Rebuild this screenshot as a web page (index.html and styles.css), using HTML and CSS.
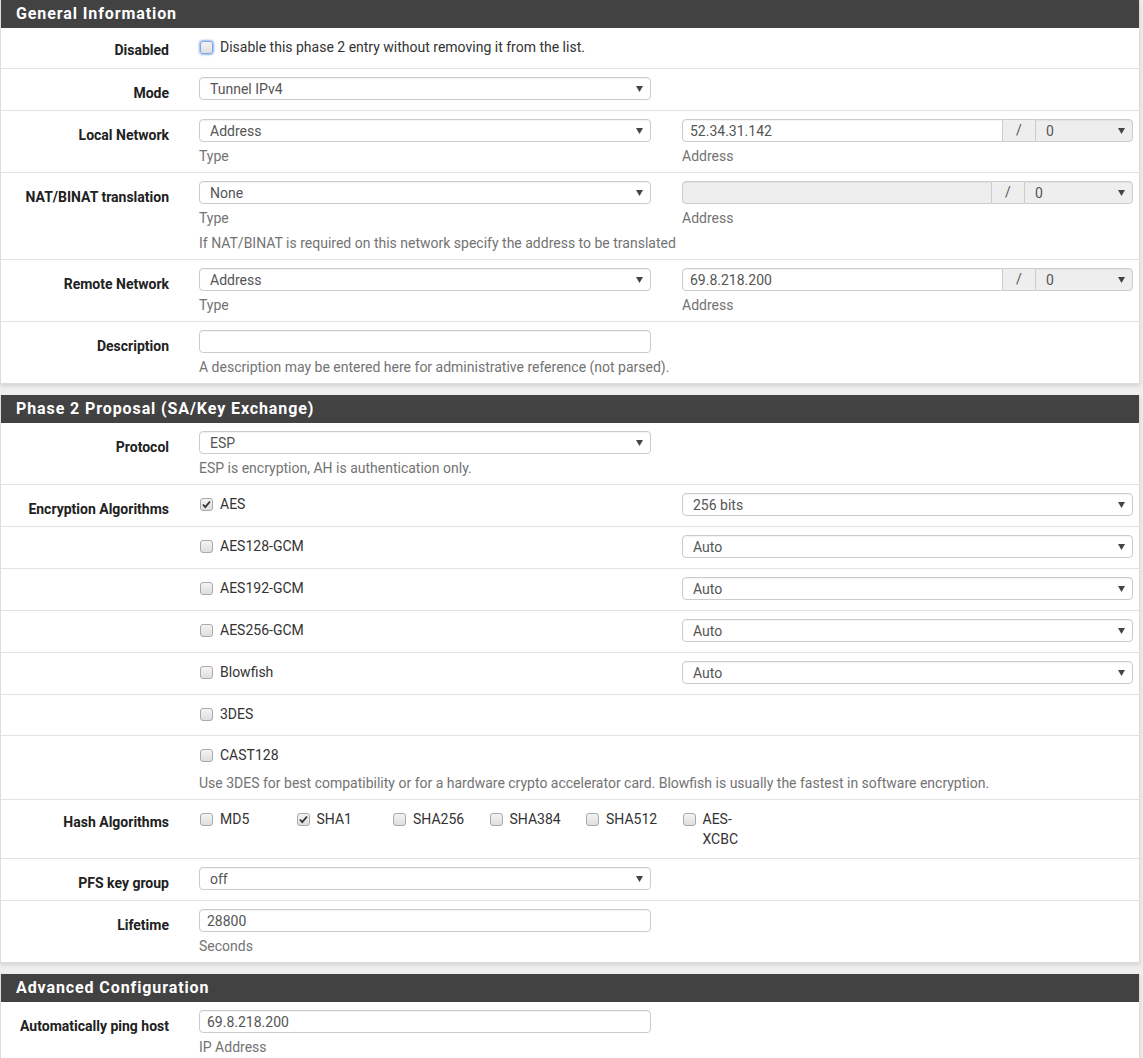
FILE: index.html
```html
<!DOCTYPE html>
<html lang="en">
<head>
<meta charset="UTF-8">
<title>IPsec Phase 2</title>
    <link rel="stylesheet" href="styles.css">
</head>
<body>
    <!-- general information -->
    <div class="panel">
        <div class="panel-heading"><h2>General Information</h2></div>
        <div class="panel-body">
            <div class="form-row check-row">
                <label class="row-label">Disabled</label>
                <div class="col col-wide">
                    <label class="check"><input type="checkbox" class="focused"><span>Disable this phase 2 entry without removing it from the list.</span></label>
                </div>
            </div>
            <div class="form-row">
                <label class="row-label">Mode</label>
                <div class="col">
                    <select><option>Tunnel IPv4</option></select>
                </div>
            </div>
            <div class="form-row">
                <label class="row-label">Local Network</label>
                <div class="col">
                    <select><option>Address</option></select>
                    <span class="help">Type</span>
                </div>
                <div class="col">
                    <div class="input-group">
                        <input type="text" value="52.34.31.142">
                        <span class="addon">/</span>
                        <select class="mask"><option>0</option></select>
                    </div>
                    <span class="help">Address</span>
                </div>
            </div>
            <div class="form-row">
                <label class="row-label">NAT/BINAT translation</label>
                <div class="col">
                    <select><option>None</option></select>
                    <span class="help">Type</span>
                </div>
                <div class="col">
                    <div class="input-group">
                        <input type="text" disabled>
                        <span class="addon">/</span>
                        <select class="mask wide-mask"><option>0</option></select>
                    </div>
                    <span class="help">Address</span>
                </div>
                <span class="help help-row">If NAT/BINAT is required on this network specify the address to be translated</span>
            </div>
            <div class="form-row">
                <label class="row-label">Remote Network</label>
                <div class="col">
                    <select><option>Address</option></select>
                    <span class="help">Type</span>
                </div>
                <div class="col">
                    <div class="input-group">
                        <input type="text" value="69.8.218.200">
                        <span class="addon">/</span>
                        <select class="mask"><option>0</option></select>
                    </div>
                    <span class="help">Address</span>
                </div>
            </div>
            <div class="form-row">
                <label class="row-label">Description</label>
                <div class="col col-wide">
                    <input type="text" class="short">
                    <span class="help">A description may be entered here for administrative reference (not parsed).</span>
                </div>
            </div>
        </div>
    </div>

    <!-- phase 2 proposal -->
    <div class="panel">
        <div class="panel-heading"><h2>Phase 2 Proposal (SA/Key Exchange)</h2></div>
        <div class="panel-body">
            <div class="form-row">
                <label class="row-label">Protocol</label>
                <div class="col">
                    <select><option>ESP</option></select>
                    <span class="help">ESP is encryption, AH is authentication only.</span>
                </div>
            </div>
            <div class="form-row">
                <label class="row-label">Encryption Algorithms</label>
                <div class="col"><label class="check"><input type="checkbox" checked><span>AES</span></label></div>
                <div class="col"><select><option>256 bits</option></select></div>
            </div>
            <div class="form-row">
                <span class="row-label"></span>
                <div class="col"><label class="check"><input type="checkbox"><span>AES128-GCM</span></label></div>
                <div class="col"><select><option>Auto</option></select></div>
            </div>
            <div class="form-row">
                <span class="row-label"></span>
                <div class="col"><label class="check"><input type="checkbox"><span>AES192-GCM</span></label></div>
                <div class="col"><select><option>Auto</option></select></div>
            </div>
            <div class="form-row">
                <span class="row-label"></span>
                <div class="col"><label class="check"><input type="checkbox"><span>AES256-GCM</span></label></div>
                <div class="col"><select><option>Auto</option></select></div>
            </div>
            <div class="form-row">
                <span class="row-label"></span>
                <div class="col"><label class="check"><input type="checkbox"><span>Blowfish</span></label></div>
                <div class="col"><select><option>Auto</option></select></div>
            </div>
            <div class="form-row check-row">
                <span class="row-label"></span>
                <div class="col"><label class="check"><input type="checkbox"><span>3DES</span></label></div>
            </div>
            <div class="form-row">
                <span class="row-label"></span>
                <div class="col col-wide">
                    <label class="check"><input type="checkbox"><span>CAST128</span></label>
                    <span class="help check-help">Use 3DES for best compatibility or for a hardware crypto accelerator card. Blowfish is usually the fastest in software encryption.</span>
                </div>
            </div>
            <div class="form-row hash-row">
                <label class="row-label">Hash Algorithms</label>
                <div class="col col-wide hash-list">
                    <label class="check hash"><input type="checkbox"><span>MD5</span></label>
                    <label class="check hash"><input type="checkbox" checked><span>SHA1</span></label>
                    <label class="check hash"><input type="checkbox"><span>SHA256</span></label>
                    <label class="check hash"><input type="checkbox"><span>SHA384</span></label>
                    <label class="check hash"><input type="checkbox"><span>SHA512</span></label>
                    <label class="check hash"><input type="checkbox"><span>AES-XCBC</span></label>
                </div>
            </div>
            <div class="form-row">
                <label class="row-label">PFS key group</label>
                <div class="col">
                    <select><option>off</option></select>
                </div>
            </div>
            <div class="form-row">
                <label class="row-label">Lifetime</label>
                <div class="col">
                    <input type="text" value="28800">
                    <span class="help">Seconds</span>
                </div>
            </div>
        </div>
    </div>

    <!-- advanced -->
    <div class="panel">
        <div class="panel-heading"><h2>Advanced Configuration</h2></div>
        <div class="panel-body">
            <div class="form-row">
                <label class="row-label">Automatically ping host</label>
                <div class="col">
                    <input type="text" value="69.8.218.200">
                    <span class="help">IP Address</span>
                </div>
            </div>
        </div>
    </div>
</body>
</html>
```

FILE: styles.css
```css
body{
    margin: 0;
    background-color: #efefef;
    font-family: Roboto, "Liberation Sans", sans-serif;
    font-size: 14px;
    color: #333333;
}
.panel{
    width: 1140px;
    background-color: #ffffff;
    border: 1px solid #dddddd;
    border-top: 0;
    box-sizing: border-box;
    margin-bottom: 11px;
    box-shadow: 0 2px 4px rgba(0,0,0,0.12);
}
.panel-heading{
    background-color: #424242;
    height: 28px;
    padding: 0 15px;
}
.panel-heading h2{
    margin: 0;
    color: #ffffff;
    font-size: 16px;
    font-weight: bold;
    line-height: 28px;
    letter-spacing: 0.9px;
}
.form-row{
    display: grid;
    grid-template-columns: 183px 482px 1fr;
    padding: 8px 0 6px;
    min-height: 42px;
    box-sizing: border-box;
    border-bottom: 1px solid #e2e2e2;
}
.form-row:last-child{
    border-bottom: 0;
}
.check-row{
    min-height: 41px;
}
.row-label{
    text-align: right;
    padding: 6px 15px 0 0;
    font-weight: bold;
    color: #212121;
    line-height: 20px;
}
.check-row .row-label, .hash-row .row-label{
    padding-top: 4px;
}
.col{
    display: flex;
    flex-direction: column;
    padding: 0 15px;
}
.col + .col{
    padding: 0 6px 0 16px;
}
.col-wide{
    grid-column: 2 / 4;
}
.help{
    display: block;
    margin-top: 4px;
    line-height: 20px;
    color: #737373;
}
.help-row{
    grid-column: 2 / 4;
    padding-left: 15px;
    margin-top: 5px;
}
.check-help{
    margin-top: 8px;
}
select, input[type="text"]{
    font-family: Roboto, "Liberation Sans", sans-serif;
    font-size: 14px;
    color: #555555;
    height: 23px;
    border: 1px solid #cccccc;
    border-radius: 4px;
    box-sizing: border-box;
    background-color: #ffffff;
    box-shadow: inset 0 1px 1px rgba(0,0,0,0.05);
    outline: none;
    margin: 0;
}
select{
    appearance: none;
    -webkit-appearance: none;
    padding: 0 24px 0 10px;
    background-image: url("data:image/svg+xml;utf8,<svg xmlns='http://www.w3.org/2000/svg' width='7' height='6'><path d='M0 0h7L3.5 6z' fill='%23444444'/></svg>");
    background-repeat: no-repeat;
    background-position: right 7px center;
}
input[type="text"]{
    padding: 0 7px;
}
input[disabled]{
    background-color: #eeeeee;
}
.input-group{
    display: flex;
}
.input-group input{
    flex: 1;
    min-width: 0;
    border-radius: 4px 0 0 4px;
}
.addon{
    width: 32px;
    height: 23px;
    box-sizing: border-box;
    border-top: 1px solid #cccccc;
    border-bottom: 1px solid #cccccc;
    background-color: #eeeeee;
    color: #555555;
    text-align: center;
    line-height: 21px;
}
.mask{
    width: 98px;
    border-radius: 0 4px 4px 0;
    background-color: #eeeeee;
}
.wide-mask{
    width: 109px;
}
.check{
    display: flex;
    align-items: flex-start;
    line-height: 20px;
    padding-top: 1px;
    color: #333333;
}
input[type="checkbox"]{
    appearance: none;
    -webkit-appearance: none;
    width: 13px;
    height: 13px;
    margin: 4px 7px 0 1px;
    flex: none;
    border: 1px solid #a9a9a9;
    border-radius: 3px;
    background: linear-gradient(#f4f4f4, #dedede);
}
input[type="checkbox"]:checked{
    background: url("data:image/svg+xml;utf8,<svg xmlns='http://www.w3.org/2000/svg' width='11' height='11'><path d='M2 5.5l2.3 2.6L9 2.5' fill='none' stroke='%23333333' stroke-width='1.8'/></svg>") no-repeat center, linear-gradient(#f4f4f4, #dedede);
}
input.focused{
    border-color: #7aa7e6;
    box-shadow: 0 0 2px 1px rgba(102,150,233,0.7);
}
.short{
    width: 452px;
}
.hash-list{
    flex-direction: row;
}
.hash{
    width: 96.5px;
    padding-right: 30px;
    box-sizing: border-box;
}
.hash-row{
    padding-bottom: 9px;
}
```
